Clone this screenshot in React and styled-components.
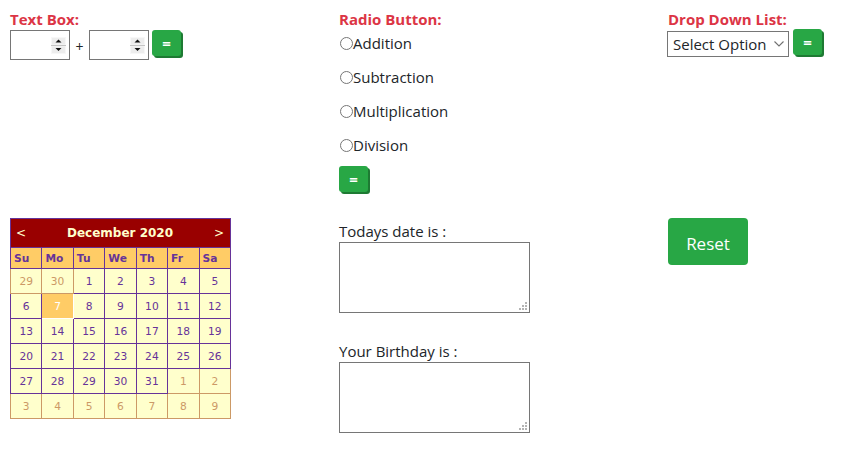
import React from "react";
import styled, { createGlobalStyle } from "styled-components";

const Global = createGlobalStyle`
  html, body { margin: 0; padding: 0; background: #fff; }
  body { font-family: "Open Sans", "Noto Sans", sans-serif; color: #212529; }
`;

const Page = styled.div`
  padding: 9px 0 0 10px;
  display: grid;
  grid-template-columns: 329px 329px 1fr;
  row-gap: 26px;
  align-items: start;
`;

const Section = styled.div`
  display: flex;
  flex-direction: column;
  align-items: flex-start;
  padding-top: ${(p) => p.$pt || 0}px;
`;

const Title = styled.div`
  font-weight: 700;
  font-size: 15px;
  line-height: 20px;
  color: #dc3545;
`;

const Controls = styled.div`
  display: flex;
  align-items: flex-start;
  margin-top: 1px;
`;

const NumberBox = styled.div`
  box-sizing: border-box;
  display: flex;
  align-items: center;
  width: 60px;
  height: 30px;
  border: 1px solid #767676;
  background: #fff;
  padding-right: 3px;
`;

const NumberField = styled.input.attrs({ type: "number" })`
  flex: 1;
  min-width: 0;
  height: 100%;
  box-sizing: border-box;
  border: none;
  outline: none;
  padding: 0 2px;
  margin: 0;
  font: 15px "Open Sans", sans-serif;
  background: transparent;
  -moz-appearance: textfield;
  &::-webkit-inner-spin-button,
  &::-webkit-outer-spin-button {
    -webkit-appearance: none;
    margin: 0;
  }
`;

const Spinner = styled.svg`
  flex: none;
  display: block;
  margin-top: 1px;
`;

const Plus = styled.span`
  width: 19px;
  height: 30px;
  line-height: 34px;
  text-align: center;
  font-size: 14px;
`;

const EqButton = styled.button`
  box-sizing: border-box;
  width: 29px;
  height: 26px;
  margin: ${(p) => p.$m || "0"};
  padding: 0;
  border: none;
  border-radius: 3px;
  background: #28a745;
  box-shadow: 2px 2px 0 #1e7a33;
  color: #fff;
  font: 700 15px "Open Sans", sans-serif;
  line-height: 26px;
  text-align: center;
`;

const RadioList = styled.div`
  display: flex;
  flex-direction: column;
  gap: 10px;
  margin-top: 2px;
`;

const RadioRow = styled.label`
  display: flex;
  align-items: center;
  height: 24px;
  font-size: 15px;
  line-height: 24px;
  color: #212529;
`;

const Radio = styled.input.attrs({ type: "radio" })`
  width: 13px;
  height: 13px;
  margin: 1px 0 0 1px;
`;

const SelectWrap = styled.div`
  position: relative;
  margin: 1px 4px 0 -1px;
`;

const Select = styled.select`
  box-sizing: border-box;
  display: block;
  width: 122px;
  height: 26px;
  margin: 0;
  border: 1px solid #767676;
  border-radius: 0;
  background: #fff;
  font: 15px "Open Sans", sans-serif;
  color: #212529;
  padding: 0 2px 0 5px;
  appearance: none;
  -webkit-appearance: none;
`;

const Chevron = styled.svg`
  position: absolute;
  right: 5px;
  top: 10px;
  pointer-events: none;
`;

const CalTable = styled.table`
  border-collapse: collapse;
  table-layout: fixed;
  width: 221px;
  border: 1px solid #663399;
  background: #ffffcc;
  font-family: "DejaVu Sans", Verdana, sans-serif;
  font-size: 10.67px;
`;

const TitleCell = styled.td`
  height: 28px;
  padding: 0;
  background: #990000;
  color: #ffffcc;
  border: 1px solid #663399;
`;

const TitleBar = styled.div`
  display: flex;
  align-items: center;
  justify-content: space-between;
  padding: 0 6px 0 5px;
  font-size: 12px;
`;

const Nav = styled.span`
  font-weight: 400;
  font-size: 12px;
`;

const MonthName = styled.span`
  font-weight: 700;
`;

const DayHead = styled.th`
  height: 20px;
  padding: 0 0 0 3px;
  background: #ffcc66;
  color: #663399;
  font-weight: 700;
  text-align: left;
  border: 1px solid #663399;
`;

const DayCell = styled.td`
  height: 24px;
  padding: 0;
  text-align: center;
  vertical-align: middle;
  color: ${(p) => (p.$today ? "#ffffff" : p.$other ? "#cc9966" : "#663399")};
  background: ${(p) => (p.$today ? "#ffcc66" : "#ffffcc")};
  border: 1px solid currentColor;
`;

const FieldLabel = styled.div`
  font-size: 15px;
  line-height: 20px;
  color: #212529;
  margin-top: ${(p) => p.$mt || 0}px;
`;

const AreaWrap = styled.div`
  position: relative;
  margin-top: 1px;
`;

const Area = styled.textarea`
  box-sizing: border-box;
  display: block;
  width: 191px;
  height: 71px;
  margin: 0;
  border: 1px solid #767676;
  border-radius: 0;
  padding: 2px;
  font: 15px "Open Sans", sans-serif;
  resize: none;
`;

const Grip = styled.svg`
  position: absolute;
  right: 3px;
  bottom: 3px;
  pointer-events: none;
`;

const ResetButton = styled.button`
  box-sizing: border-box;
  width: 80px;
  height: 47px;
  border: none;
  border-radius: 4px;
  background: #28a745;
  color: #fff;
  font: 400 17px "Open Sans", sans-serif;
  padding: 3px 0 0;
`;

const days = ["Su", "Mo", "Tu", "We", "Th", "Fr", "Sa"];

const weeks = [
  [[29, 1], [30, 1], [1], [2], [3], [4], [5]],
  [[6], [7, 0, 1], [8], [9], [10], [11], [12]],
  [[13], [14], [15], [16], [17], [18], [19]],
  [[20], [21], [22], [23], [24], [25], [26]],
  [[27], [28], [29], [30], [31], [1, 1], [2, 1]],
  [[3, 1], [4, 1], [5, 1], [6, 1], [7, 1], [8, 1], [9, 1]],
];

function Calendar() {
  return (
    <CalTable>
      <tbody>
        <tr>
          <TitleCell colSpan={7}>
            <TitleBar>
              <Nav>&lt;</Nav>
              <MonthName>December 2020</MonthName>
              <Nav>&gt;</Nav>
            </TitleBar>
          </TitleCell>
        </tr>
        <tr>
          {days.map((d) => (
            <DayHead key={d}>{d}</DayHead>
          ))}
        </tr>
        {weeks.map((w, i) => (
          <tr key={i}>
            {w.map(([n, other, today], j) => (
              <DayCell key={j} $other={!!other} $today={!!today}>
                {n}
              </DayCell>
            ))}
          </tr>
        ))}
      </tbody>
    </CalTable>
  );
}

function NumberInput() {
  return (
    <NumberBox>
      <NumberField />
      <Spinner width="15" height="17" viewBox="0 0 15 17">
        <rect x="0" y="0" width="15" height="17" fill="#e4e4e4" />
        <rect x="0.5" y="0.5" width="14" height="7.5" fill="#ededed" stroke="#f7f7f7" />
        <rect x="0.5" y="9" width="14" height="7.5" fill="#ededed" stroke="#f7f7f7" />
        <line x1="0" y1="8.5" x2="15" y2="8.5" stroke="#c4c4c4" />
        <path d="M7.5 2.5 L10.5 5.5 L4.5 5.5 Z" fill="#111" />
        <path d="M4.5 11 L10.5 11 L7.5 14 Z" fill="#111" />
      </Spinner>
    </NumberBox>
  );
}

function TextArea() {
  const dots = [
    [6, 0],
    [3, 3], [6, 3],
    [0, 6], [3, 6], [6, 6],
  ];
  return (
    <AreaWrap>
      <Area />
      <Grip width="8" height="8" viewBox="0 0 8 8">
        {dots.map(([x, y], i) => (
          <rect key={i} x={x} y={y} width="2" height="2" fill="#b4b4b4" />
        ))}
      </Grip>
    </AreaWrap>
  );
}

export default function App() {
  return (
    <>
      <Global />
      <Page>
        <Section>
          <Title>Text Box:</Title>
          <Controls>
            <NumberInput />
            <Plus>+</Plus>
            <NumberInput />
            <EqButton $m="0 0 0 3px">=</EqButton>
          </Controls>
        </Section>
        <Section>
          <Title>Radio Button:</Title>
          <RadioList>
            <RadioRow><Radio name="op" />Addition</RadioRow>
            <RadioRow><Radio name="op" />Subtraction</RadioRow>
            <RadioRow><Radio name="op" />Multiplication</RadioRow>
            <RadioRow><Radio name="op" />Division</RadioRow>
          </RadioList>
          <EqButton $m="9px 0 0 0">=</EqButton>
        </Section>
        <Section>
          <Title>Drop Down List:</Title>
          <Controls>
            <SelectWrap>
              <Select defaultValue="">
                <option value="">Select Option</option>
                <option value="a">Addition</option>
                <option value="s">Subtraction</option>
                <option value="m">Multiplication</option>
                <option value="d">Division</option>
              </Select>
              <Chevron width="10" height="6" viewBox="0 0 10 6">
                <path d="M0.5 0.5 L5 5 L9.5 0.5" fill="none" stroke="#707070" strokeWidth="1.1" />
              </Chevron>
            </SelectWrap>
            <EqButton $m="-1px 0 0 0">=</EqButton>
          </Controls>
        </Section>

        <Section>
          <Calendar />
        </Section>
        <Section $pt={3}>
          <FieldLabel>Todays date is :</FieldLabel>
          <TextArea />
          <FieldLabel $mt={28}>Your Birthday is :</FieldLabel>
          <TextArea />
        </Section>
        <Section>
          <ResetButton>Reset</ResetButton>
        </Section>
      </Page>
    </>
  );
}
